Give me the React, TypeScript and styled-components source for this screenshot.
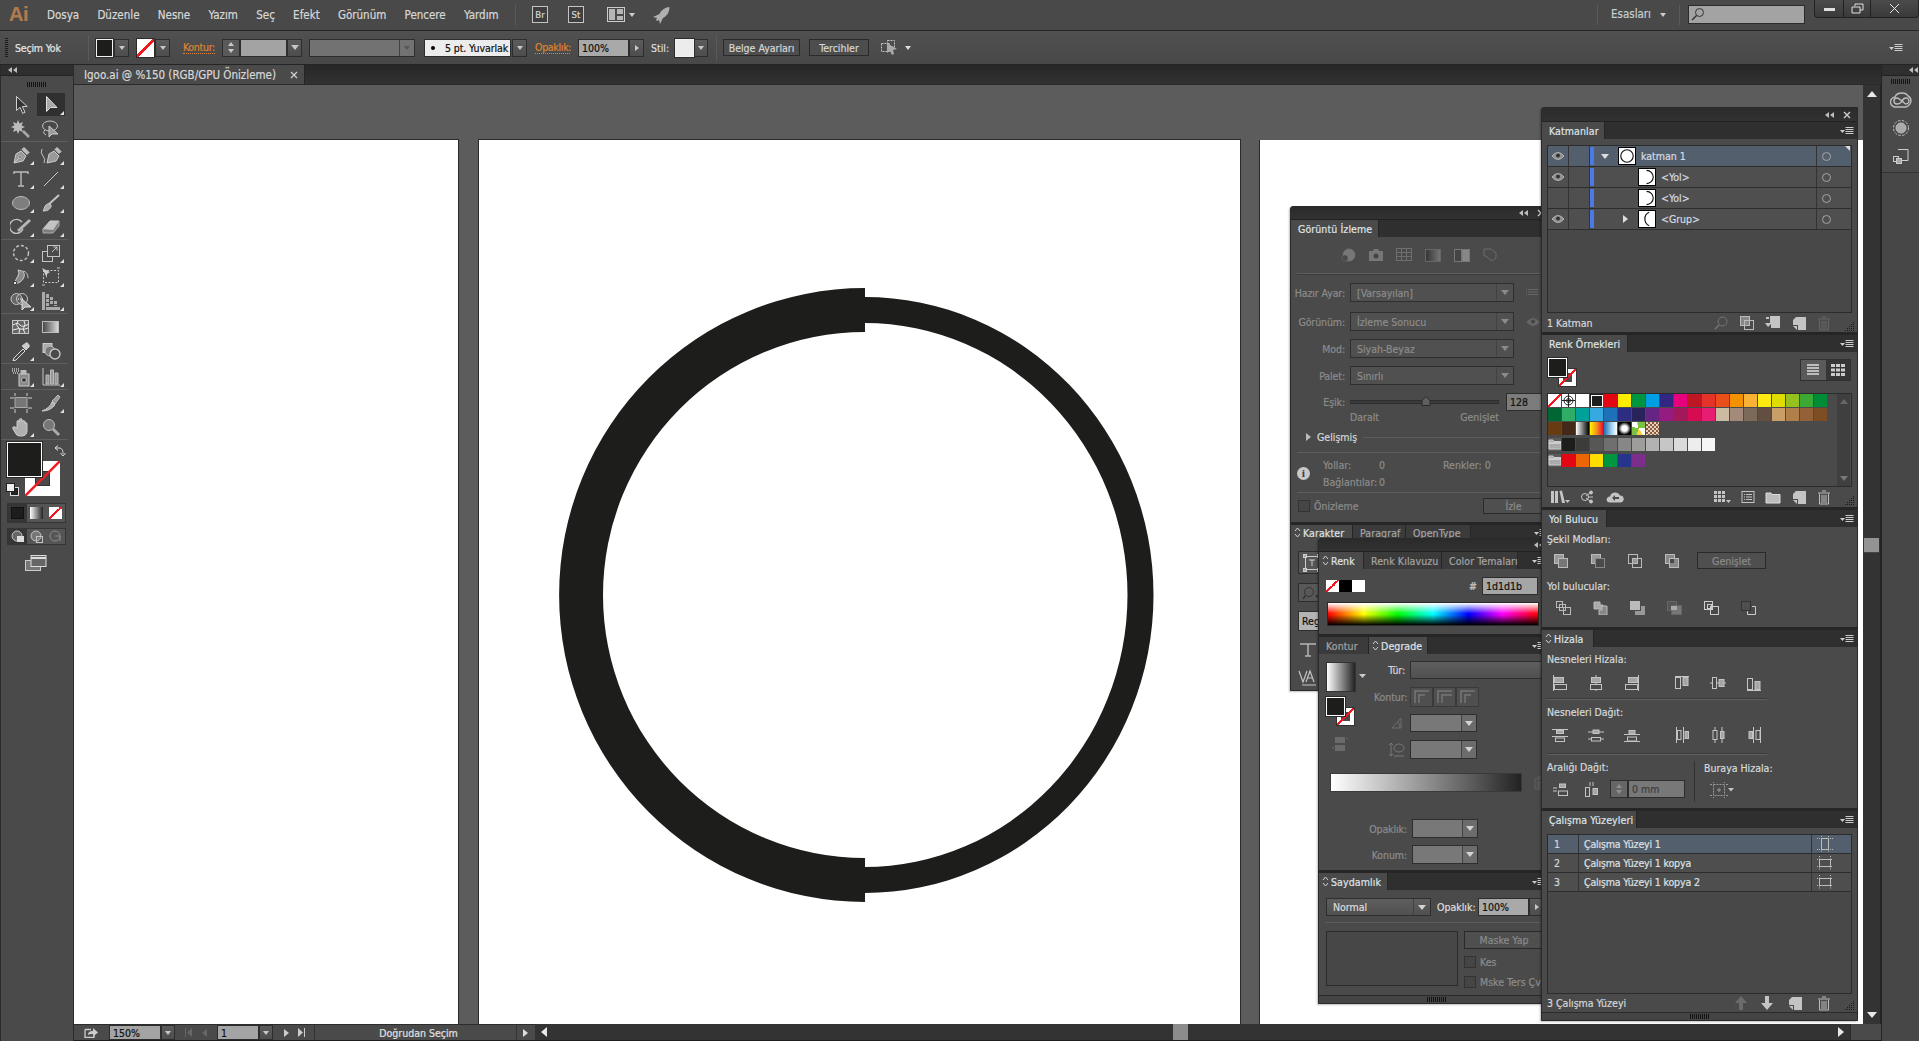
import React from 'react';
import styled, { createGlobalStyle } from 'styled-components';

const Global = createGlobalStyle`
  html, body { margin: 0; padding: 0; background: #2b2b2b; overflow: hidden; }
  * { box-sizing: border-box; }
`;

const UI = `"DejaVu Sans Condensed", "Liberation Sans", sans-serif`;

const Root = styled.div`
  width: 1919px; height: 1041px; display: flex; flex-direction: column; overflow: hidden;
  font-family: ${UI}; font-size: 10.5px; color: #d2d6da; background: #2b2b2b; position: relative;
  -webkit-text-stroke: 0.2px currentColor;
`;

const NONE_BG = 'linear-gradient(135deg,#fff 0 44%,#f01922 44% 56%,#fff 56%)';
const STROKE_BG = 'linear-gradient(135deg,transparent 45%,#f01922 45% 55%,transparent 55%), linear-gradient(#494949,#494949) center/9px 9px no-repeat, #fff';

/* ---------- primitives ---------- */
const Svg = styled.svg<{ $c?: string }>`
  display: block; flex: none; fill: none; stroke: ${p => p.$c || '#c4c4c4'}; stroke-width: 1;
`;
const Tri = styled.span<{ $dir?: 'up' | 'down' | 'left' | 'right'; $s?: number; $c?: string; $ml?: number }>`
  display: block; flex: none; width: 0; height: 0; margin-left: ${p => p.$ml || 0}px;
  ${p => {
    const s = p.$s || 4; const c = p.$c || '#c8c8c8';
    switch (p.$dir) {
      case 'up': return `border-left:${s}px solid transparent;border-right:${s}px solid transparent;border-bottom:${s + 1}px solid ${c};`;
      case 'left': return `border-top:${s}px solid transparent;border-bottom:${s}px solid transparent;border-right:${s + 1}px solid ${c};`;
      case 'right': return `border-top:${s}px solid transparent;border-bottom:${s}px solid transparent;border-left:${s + 1}px solid ${c};`;
      default: return `border-left:${s}px solid transparent;border-right:${s}px solid transparent;border-top:${s + 1}px solid ${c};`;
    }
  }}
`;
const CollapseMark = styled.span`
  display: flex; gap: 1px; align-items: center;
`;
const Collapse = ({ c = '#bdbdbd' }: { c?: string }) => (
  <CollapseMark><Tri $dir="left" $s={3} $c={c} /><Tri $dir="left" $s={3} $c={c} /></CollapseMark>
);
const GripBars = styled.div<{ $w?: number }>`
  width: ${p => p.$w || 20}px; height: 5px; flex: none;
  background: repeating-linear-gradient(to right, #141414 0 1px, transparent 1px 2px);
`;

/* ---------- menu bar ---------- */
const MenuBar = styled.header`
  height: 31px; flex: none; display: flex; align-items: flex-start; background: #494949;
  border-bottom: 1px solid #262626; position: relative;
`;
const AiLogo = styled.div`
  width: 47px; padding: 3px 0 0 9px; font: bold 20px/23px "Liberation Sans", sans-serif; color: #b17b50; flex: none; letter-spacing: -0.5px;
`;
const MenuList = styled.nav`
  display: flex; gap: 18.25px; height: 30px; align-items: center; flex: none; font-size: 11.5px; color: #d8d8d8; width: 468px;
`;
const BarSep = styled.div<{ $ml?: number; $h?: number }>`
  width: 1px; flex: none; height: ${p => p.$h || 20}px; background: #2e2e2e; margin-left: ${p => p.$ml || 0}px;
  border-right: 1px solid #5a5a5a; align-self: center;
`;
const AppBadge = styled.div<{ $ml: number }>`
  width: 16px; height: 17px; border: 1px solid #c4c4c4; margin: 6px 0 0 ${p => p.$ml}px; flex: none; font-size: 9.5px;
  line-height: 15px; text-align: center; color: #d8d8d8; background: #3f3f3f;
`;
const MenuIconSlot = styled.div<{ $ml: number; $mt?: number }>`
  margin: ${p => p.$mt ?? 7}px 0 0 ${p => p.$ml}px; flex: none; display: flex; align-items: center; gap: 4px;
`;
const WorkspaceName = styled.div`
  margin: 0 0 0 13px; width: 47px; height: 30px; line-height: 29px; font-size: 11.5px; color: #c5ced2; flex: none;
`;
const SearchBox = styled.div`
  width: 117px; height: 19px; margin: 5px 0 0 8px; background: #a3a3a3; border: 1px solid #2b2b2b; padding: 1px 0 0 2px; flex: none;
`;
const WindowButtons = styled.div`
  display: flex; height: 18px; margin-left: 9px; background: linear-gradient(#4b4b4b, #3a3a3a); border: 1px solid #222; border-top: 0; border-radius: 0 0 4px 4px; flex: none;
`;
const WinBtn = styled.div<{ $w: number }>`
  width: ${p => p.$w}px; display: flex; align-items: center; justify-content: center; border-right: 1px solid #222;
  &:last-child { border-right: 0; }
`;

/* ---------- control bar ---------- */
const ControlBar = styled.div`
  height: 34px; flex: none; display: flex; align-items: center; background: linear-gradient(#505050, #484848);
  border-bottom: 1px solid #242424; position: relative;
`;
const DotsGrip = styled.div`
  width: 3px; height: 20px; margin-left: 5px; flex: none;
  background: repeating-linear-gradient(to bottom, #1c1c1c 0 1px, transparent 1px 2px);
`;
const NoSel = styled.div`
  width: 60px; margin-left: 7px; flex: none; font-size: 10.5px; color: #e6e6e6; letter-spacing: -0.2px;
`;
const FillChip = styled.div<{ $ml: number; $bg?: string; $w?: number }>`
  width: ${p => p.$w || 17}px; height: 18px; margin-left: ${p => p.$ml}px; border: 1px solid #f2f2f2; background: ${p => p.$bg || '#1d1d1b'}; flex: none; outline: 1px solid #2c2c2c;
`;
const NoneChip = styled.div<{ $ml: number }>`
  width: 17px; height: 18px; margin-left: ${p => p.$ml}px; flex: none; outline: 1px solid #2c2c2c;
  background: ${NONE_BG};
`;
const Drop = styled.div<{ $w?: number; $h?: number; $ml?: number }>`
  width: ${p => p.$w || 15}px; height: ${p => p.$h || 18}px; margin-left: ${p => p.$ml ?? 1}px; flex: none;
  background: linear-gradient(#5c5c5c, #4d4d4d); border: 1px solid #2d2d2d; display: flex; align-items: center; justify-content: center;
`;
const OrangeLabel = styled.div<{ $ml: number; $w: number }>`
  margin-left: ${p => p.$ml}px; width: ${p => p.$w}px; flex: none; color: #dd8531; font-size: 10.5px; letter-spacing: -0.3px;
  border-bottom: 1px dotted #dd8531; line-height: 12px; white-space: nowrap;
`;
const Stepper = styled.div<{ $ml?: number; $w?: number; $h?: number; $bg?: string }>`
  width: ${p => p.$w || 18}px; height: ${p => p.$h || 18}px; margin-left: ${p => p.$ml || 0}px; flex: none; display: flex; flex-direction: column;
  background: ${p => p.$bg || '#5a5a5a'}; align-items: center; justify-content: space-evenly; border: 1px solid #2d2d2d;
`;
const Field = styled.div<{ $w: number; $h?: number; $ml?: number; $bg?: string; $c?: string }>`
  width: ${p => p.$w}px; height: ${p => p.$h || 18}px; margin-left: ${p => p.$ml || 0}px; flex: none; background: ${p => p.$bg || '#a6a6a6'};
  color: ${p => p.$c || '#111'}; border: 1px solid #2d2d2d; display: flex; align-items: center; padding-left: 3px; font-size: 10.5px; white-space: nowrap; overflow: hidden;
`;
const BrushBox = styled.div`
  width: 87px; height: 18px; margin-left: 9px; background: #ececec; flex: none; border: 1px solid #2d2d2d; color: #111; font-size: 10.5px;
  display: flex; align-items: center; padding-left: 6px; gap: 10px; white-space: nowrap; letter-spacing: -0.1px;
`;
const BrushDot = styled.span`width: 4px; height: 4px; border-radius: 50%; background: #000; flex: none;`;
const PlainLabel = styled.div<{ $ml?: number; $w?: number }>`
  margin-left: ${p => p.$ml || 0}px; width: ${p => (p.$w ? `${p.$w}px` : 'auto')}; flex: none; font-size: 10.5px; white-space: nowrap; color: #dedede;
`;
const Btn = styled.div<{ $w: number; $h?: number; $ml?: number; $dim?: boolean }>`
  width: ${p => p.$w}px; height: ${p => p.$h || 17}px; margin-left: ${p => p.$ml || 0}px; flex: none; display: flex; align-items: center; justify-content: center;
  background: ${p => (p.$dim ? '#4f4f4f' : '#4d4d4d')}; border: 1px solid #2a2a2a; color: ${p => (p.$dim ? '#8a8a8a' : '#d6d6d6')}; font-size: 10.5px; white-space: nowrap;
`;

/* ---------- workspace ---------- */
const Workspace = styled.div`display: flex; flex: 1; min-height: 0;`;
const ToolColumn = styled.aside`
  width: 74px; flex: none; display: flex; flex-direction: column; background: #4a4a4a; border-left: 1px solid #2b2b2b; border-right: 1px solid #2b2b2b;
`;
const DockHead = styled.div`
  height: 11px; background: #2f2f2f; flex: none; display: flex; align-items: center; padding: 0 7px; border-bottom: 1px solid #222;
`;
const ToolGrip = styled.div`
  height: 17px; display: flex; justify-content: center; align-items: center; flex: none;
`;
const ToolGroup = styled.div`
  padding: 0 0 0 5px; margin: 0 5px 1px 0; border-bottom: 1px solid #5f5f5f;
`;
const ToolRow = styled.div`display: grid; grid-template-columns: 30px 30px; height: 24px;`;
const Tool = styled.div<{ $active?: boolean; $corner?: boolean }>`
  display: flex; align-items: center; justify-content: center; position: relative; width: 28px; height: 23px; margin-left: 1px;
  background: ${p => (p.$active ? '#303030' : 'transparent')};
  ${p => p.$corner && `&::after { content:""; position:absolute; right:1px; bottom:1px; width:0; height:0; border-left:4px solid transparent; border-bottom:4px solid #e0e0e0; }`}
`;
const ColorWell = styled.div`
  position: relative; width: 60px; height: 55px; margin: 1px 0 0 6px; flex: none;
`;
const BigFill = styled.div`
  position: absolute; left: 0; top: 0; width: 35px; height: 35px; background: #1d1d1b; border: 1px solid #fff; outline: 1px solid #2a2a2a; z-index: 2;
`;
const BigStroke = styled.div`
  position: absolute; left: 18px; top: 19px; width: 35px; height: 35px; z-index: 1; background: #fff;
`;
const StrokeHole = styled.div`
  width: 15px; height: 15px; margin: 10px; background: #494949; border: 1px solid #333;
`;
const SlashSvg = styled.svg`position: absolute; left: 18px; top: 19px; z-index: 1;`;
const SwapSlot = styled.div`position: absolute; left: 47px; top: 2px; z-index: 3;`;
const DefaultSlot = styled.div`position: absolute; left: -1px; top: 41px; z-index: 3;`;
const ToolSegments = styled.div<{ $mt: number; $h: number }>`
  display: flex; width: 59px; height: ${p => p.$h}px; margin: ${p => p.$mt}px 0 0 6px; border: 1px solid #353535; flex: none; background: #3d3d3d;
`;
const ToolSeg = styled.div<{ $on?: boolean }>`
  flex: 1; display: flex; align-items: center; justify-content: center; background: ${p => (p.$on ? '#363636' : '#555')};
`;
const ScreenSlot = styled.div`margin: 10px 0 0 24px; flex: none;`;

const DocArea = styled.main`flex: 1; min-width: 0; display: flex; flex-direction: column;`;
const DocTabs = styled.div`height: 20px; flex: none; background: linear-gradient(#272727, #313131); display: flex; border-bottom: 1px solid #2a2a2a;`;
const DocTab = styled.div`
  width: 231px; background: #4a4a4a; display: flex; align-items: center; padding-left: 10px; font-size: 11.5px; color: #d8d8d8; white-space: nowrap;
  border-right: 1px solid #242424;
`;
const DocClose = styled.span`margin-left: auto; margin-right: 6px; display: block;`;
const CanvasRow = styled.div`flex: 1; min-height: 0; display: flex;`;
const Canvas = styled.div`
  flex: 1; min-width: 0; position: relative; background: #5c5c5c; overflow: hidden; display: flex; gap: 20px; padding: 55px 0 0 0;
`;
const Artboard = styled.div<{ $w: number; $mr?: number }>`
  width: ${p => p.$w}px; margin-right: ${p => p.$mr || 0}px; background: #fff; flex: none; align-self: stretch; box-shadow: 0 0 0 1px #2a2a2a; position: relative;
`;
const WideArtboard = styled(Artboard)`flex: 1; box-shadow: none; border-left: 1px solid #2a2a2a;`;
const ArtSvg = styled.svg`display: block;`;
const VScroll = styled.div`
  width: 18px; flex: none; background: #333; border-right: 1px solid #242424; display: flex; flex-direction: column; align-items: center; padding: 6px 0; position: relative;
`;
const VTrack = styled.div`flex: 1;`;
const VThumb = styled.div`position: absolute; left: 1px; top: 453px; width: 15px; height: 15px; background: #939393; border-bottom: 1px solid #444;`;
const StatusRow = styled.footer`
  height: 17px; flex: none; display: flex; background: #333; border-bottom: 1px solid #1e1e1e;
`;
const StatusInfo = styled.div`
  width: 461px; flex: none; display: flex; align-items: center; background: #4a4a4a; border-top: 1px solid #2d2d2d;
`;
const StatusText = styled.div`width: 201px; text-align: center; padding-left: 6px; flex: none; font-size: 10.5px; color: #e0e0e0; white-space: nowrap;`;
const StatusSep = styled.div`width: 1px; height: 15px; background: #333; flex: none;`;
const HScroll = styled.div`flex: 1; display: flex; align-items: center; position: relative; padding: 0 6px; justify-content: space-between; background: #333;`;
const HThumb = styled.div`position: absolute; left: 638px; top: 0; width: 15px; height: 16px; background: #8c8c8c;`;
const Corner = styled.div`width: 31px; flex: none; background: #4a4a4a; border-left: 1px solid #292929;`;

const RightDock = styled.aside`
  width: 38px; flex: none; display: flex; flex-direction: column; background: #474747; border-left: 1px solid #242424;
`;
const RightHead = styled(DockHead)`justify-content: flex-end; padding: 0 1px;`;
const RightTools = styled.div`
  height: 97px; flex: none; border-bottom: 1px solid #333; background: #4a4a4a; display: flex; flex-direction: column; align-items: center; padding-top: 3px; gap: 12px;
`;
const RightGrip = styled(GripBars)`margin-bottom: -4px;`;

/* ---------- floating panels ---------- */
const PanelStack = styled.div<{ $x: number; $y: number; $w: number; $z?: number }>`
  position: absolute; left: ${p => p.$x}px; top: ${p => p.$y}px; width: ${p => p.$w}px; display: flex; flex-direction: column; z-index: ${p => p.$z || 1};
  background: #262626; gap: 3px; box-shadow: -1px 1px 2px rgba(0,0,0,.25); border: 1px solid #2a2a2a; border-top-left-radius: 3px;
`;
const Panel = styled.section<{ $h: number }>`
  height: ${p => p.$h}px; flex: none; background: #4a4a4a; display: flex; flex-direction: column; position: relative; overflow: hidden;
`;
const TitleStrip = styled.div<{ $h?: number }>`
  height: ${p => p.$h || 14}px; flex: none; background: linear-gradient(#2b2b2b, #323232); display: flex; align-items: center; justify-content: flex-end; gap: 9px; padding-right: 6px; border-bottom: 1px solid #222;
`;
const TabStrip = styled.div<{ $h?: number }>`
  height: ${p => p.$h || 17}px; flex: none; background: #2f2f2f; display: flex; align-items: stretch; position: relative; font-size: 10.5px; white-space: nowrap;
`;
const PTab = styled.div<{ $active?: boolean; $w: number }>`
  width: ${p => p.$w}px; flex: none; display: flex; align-items: center; gap: 2px; padding-left: ${p => (p.$active ? 3 : 7)}px; white-space: nowrap;
  background: ${p => (p.$active ? '#4a4a4a' : '#3b3b3b')}; color: ${p => (p.$active ? '#dfe3e6' : '#a4a4a4')}; border-right: 1px solid #262626;
  letter-spacing: 0.1px;
`;
const PTabPlain = styled(PTab)`padding-left: 7px;`;
const TabMenu = styled.div`margin-left: auto; align-self: center; margin-right: 3px;`;
const Body = styled.div`
  flex: 1; min-height: 0; display: flex; flex-direction: column; color: #d2d6da;
`;
const ListBox = styled.div<{ $h: number; $mt?: number }>`
  margin: ${p => p.$mt ?? 6}px 0 0 5px; width: 305px; height: ${p => p.$h}px; flex: none; border: 1px solid #2b2b2b; background: #484848; position: relative;
`;
const LayerRow = styled.div<{ $sel?: boolean }>`
  height: 21px; display: flex; align-items: stretch; background: ${p => (p.$sel ? '#545f6e' : '#4f4f4f')}; border-bottom: 1px solid #2d2d2d; position: relative; font-size: 10.5px;
`;
const EyeCell = styled.div`width: 21px; flex: none; border-right: 1px solid #333; display: flex; align-items: center; justify-content: center;`;
const LockCell = styled.div`width: 21px; flex: none; border-right: 1px solid #333;`;
const ColorBar = styled.div`width: 4px; margin: 1px 3px 1px 0; flex: none; background: #4a79e8;`;
const TreeCell = styled.div<{ $w: number; $pr?: number }>`width: ${p => p.$w}px; flex: none; display: flex; align-items: center; padding-right: ${p => p.$pr || 0}px; justify-content: center;`;
const Thumb = styled.div`width: 18px; height: 18px; margin-top: 1px; flex: none; background: #fff; border: 1px solid #000;`;
const LayerName = styled.div<{ $ml: number }>`margin-left: ${p => p.$ml}px; align-self: center; flex: 1; color: #d6dbe0;`;
const TargetCell = styled.div`width: 35px; flex: none; border-left: 1px solid #333; display: flex; align-items: center; padding-left: 5px;`;
const Target = styled.span`width: 9px; height: 9px; border-radius: 50%; border: 1px solid #a5a5a5; display: block;`;
const CornerMark = styled.span`position: absolute; right: 1px; top: 0; width: 0; height: 0; border-top: 5px solid #ddd; border-left: 5px solid transparent;`;
const PanelFooter = styled.div<{ $h?: number }>`
  height: ${p => p.$h || 20}px; flex: none; display: flex; align-items: center; padding: 0 26px 0 5px; position: relative; font-size: 10.5px;
`;
const FooterIcons = styled.div<{ $gap?: number }>`margin-left: auto; display: flex; gap: ${p => p.$gap ?? 10}px; align-items: center;`;
const FooterLeft = styled.div`display: flex; gap: 11px; align-items: center; margin-left: 3px;`;
const Resize = styled.div`position: absolute; right: 2px; bottom: 1px;`;

const SwatchHead = styled.div`height: 41px; flex: none; position: relative;`;
const MiniFill = styled.div`position: absolute; left: 6px; top: 6px; width: 19px; height: 19px; background: #1d1d1b; border: 1px solid #fff; z-index: 2; outline: 1px solid #2a2a2a;`;
const MiniStroke = styled.div`position: absolute; left: 16px; top: 16px; width: 19px; height: 19px; z-index: 1; background: ${STROKE_BG}; border: 1px solid #333;`;
const ViewToggle = styled.div`position: absolute; left: 258px; top: 7px; width: 51px; height: 22px; display: flex; border: 1px solid #303030;`;
const ViewBtn = styled.div<{ $on?: boolean }>`flex: 1; display: flex; align-items: center; justify-content: center; background: ${p => (p.$on ? '#5a5a5a' : '#363636')};`;
const SwatchList = styled.div`
  margin-left: 5px; width: 305px; height: 94px; flex: none; border: 1px solid #2b2b2b; background: #4a4a4a; display: flex;
`;
const SwatchRows = styled.div`flex: 1;`;
const SwatchLine = styled.div<{ $mb?: number }>`display: flex; margin-bottom: ${p => p.$mb || 0}px; height: 14px;`;
const Swatch = styled.div<{ $bg: string }>`
  width: 14px; height: 14px; flex: none; border-right: 1px solid #4a4a4a; border-bottom: 1px solid #4a4a4a; position: relative; overflow: hidden; background: ${p => p.$bg};
`;
const FramedSwatch = styled(Swatch)`outline: 1px solid #fff; outline-offset: -2px;`;
const ListScroll = styled.div`width: 13px; flex: none; background: #3f3f3f; display: flex; flex-direction: column; align-items: center; justify-content: space-between; padding: 5px 0; margin-right: 1px;`;

const SectionLabel = styled.div<{ $mt: number; $ml?: number }>`margin: ${p => p.$mt}px 0 0 ${p => p.$ml ?? 5}px; font-size: 10.5px; line-height: 13px; color: #d4dade; white-space: nowrap; flex: none;`;
const IconLine = styled.div<{ $mt: number; $pl?: number }>`display: flex; margin-top: ${p => p.$mt}px; padding-left: ${p => p.$pl || 0}px; align-items: center; flex: none;`;
const IconCell = styled.div<{ $w?: number; $mr?: number }>`width: ${p => p.$w || 36}px; margin-right: ${p => p.$mr || 0}px; display: flex; justify-content: center; flex: none;`;
const HRule = styled.div<{ $mt: number; $w?: number; $ml?: number }>`height: 1px; background: #5f5f5f; box-shadow: 0 -1px 0 #3a3a3a; margin: ${p => p.$mt}px 0 0 ${p => p.$ml ?? 5}px; width: ${p => (p.$w ? `${p.$w}px` : 'auto')}; flex: none;`;
const SplitRow = styled.div`display: flex; flex: none;`;
const SplitCol = styled.div<{ $w?: number }>`width: ${p => (p.$w ? `${p.$w}px` : 'auto')}; flex: none; display: flex; flex-direction: column;`;
const VRule = styled.div`width: 1px; height: 41px; background: #333; margin: 6px 9px 0 0; flex: none;`;

const ArtRow = styled.div<{ $sel?: boolean }>`height: 19px; display: flex; align-items: stretch; background: ${p => (p.$sel ? '#545f6e' : '#4e4e4e')}; border-bottom: 1px solid #2d2d2d; font-size: 10.5px;`;
const ArtNum = styled.div`width: 31px; flex: none; border-right: 1px solid #333; display: flex; align-items: center; padding-left: 6px;`;
const ArtName = styled.div`flex: 1; display: flex; align-items: center; padding-left: 5px; color: #dde0e3; letter-spacing: -0.15px;`;
const ArtIcon = styled.div`width: 40px; flex: none; border-left: 1px solid #333; display: flex; align-items: center; padding-left: 5px;`;
const BottomGrip = styled.div<{ $left?: number }>`
  height: 8px; flex: none; display: flex; align-items: center; justify-content: ${p => (p.$left ? 'flex-start' : 'center')}; padding-left: ${p => p.$left || 0}px;
  border-top: 1px solid #2a2a2a; background: #444; margin-top: auto;
`;

/* trace panel */
const TraceIcons = styled.div`height: 37px; flex: none; display: flex; align-items: center; gap: 13px; padding: 0 0 0 43px; border-bottom: 1px solid #5d5d5d; margin: 0 0 0 6px; box-shadow: 0 1px 0 #3c3c3c;`;
const FormRow = styled.div<{ $mt: number }>`display: flex; align-items: center; margin-top: ${p => p.$mt}px; flex: none;`;
const FormLabel = styled.div<{ $w: number; $c?: string }>`width: ${p => p.$w}px; text-align: right; flex: none; color: ${p => p.$c || '#8c8c8c'}; font-size: 10.5px; white-space: nowrap; letter-spacing: -0.1px;`;
const Select = styled.div<{ $w: number; $h?: number; $ml?: number; $bg?: string; $c?: string }>`
  width: ${p => p.$w}px; height: ${p => p.$h || 19}px; margin-left: ${p => p.$ml ?? 5}px; flex: none; display: flex; align-items: center; border: 1px solid #2e2e2e; background: ${p => p.$bg || '#505050'};
  color: ${p => p.$c || '#8c8c8c'}; padding-left: 6px; font-size: 10.5px; white-space: nowrap;
`;
const SelectArrow = styled.div<{ $bg?: string; $w?: number }>`margin-left: auto; width: ${p => p.$w || 17}px; height: 100%; display: flex; align-items: center; justify-content: center; border-left: 1px solid #424242; background: ${p => p.$bg || 'transparent'};`;
const SliderTrack = styled.div`width: 149px; height: 4px; margin-left: 5px; background: #3c3c3c; border: 1px solid #2d2d2d; position: relative; flex: none;`;
const SliderKnob = styled.div`position: absolute; left: 70px; top: -5px;`;
const MiniLabels = styled.div`display: flex; justify-content: space-between; width: 149px; margin: 0 0 0 59px; color: #8c8c8c; flex: none; font-size: 10.5px;`;
const AdvancedRow = styled.div`height: 16px; margin-top: 6px; display: flex; align-items: center; padding-left: 15px; gap: 6px; flex: none; color: #d5d5d5; font-size: 10.5px;`;
const AdvLine = styled.div`flex: 1; height: 1px; background: #5d5d5d;`;
const InfoArea = styled.div`display: flex; height: 41px; margin-left: 6px; flex: none; border-top: 1px solid #5d5d5d; margin-top: 7px; border-bottom: 1px solid #5d5d5d;`;
const InfoDot = styled.div`width: 13px; height: 13px; border-radius: 50%; background: #c9c9c9; color: #3a3a3a; font: bold 10px/13px "Liberation Serif", serif; text-align: center; margin: 14px 13px 0 0; flex: none;`;
const InfoGrid = styled.div`display: grid; grid-template-columns: 56px 64px 60px; grid-auto-rows: 17px; padding-top: 6px; color: #8c8c8c; font-size: 10.5px; white-space: nowrap;`;
const Check = styled.div<{ $ml?: number }>`width: 12px; height: 12px; border: 1px solid #333; background: #454545; margin-left: ${p => p.$ml ?? 0}px; flex: none;`;
const DimText = styled.div<{ $ml?: number }>`margin-left: ${p => p.$ml ?? 4}px; color: #8c8c8c; font-size: 10.5px; white-space: nowrap;`;
const Spacer12 = styled.div`margin-left: 12px; flex: none;`;
const AngleWrap = styled.div`display: flex; justify-content: flex-end;`;

/* character panel slivers */
const CharBody = styled.div`flex: 1; padding: 11px 0 0 7px; display: flex; flex-direction: column; gap: 9px;`;
const CharBox = styled.div<{ $h: number; $bg?: string }>`width: 40px; height: ${p => p.$h}px; background: ${p => p.$bg || '#555'}; border: 1px solid #2d2d2d; display: flex; align-items: center; color: #111; padding-left: 3px; flex: none; font-size: 10.5px;`;

/* color panel */
const ColorTop = styled.div`display: flex; height: 25px; align-items: center; padding: 8px 0 0 7px; flex: none;`;
const MiniSw = styled.div<{ $bg: string; $dark?: boolean }>`width: 13px; height: 12px; flex: none; background: ${p => p.$bg}; ${p => p.$dark && 'border: 1px solid #111;'}`;
const HashLabel = styled.div`margin-left: 104px; width: 13px; color: #bbb; font-weight: bold; font-size: 10.5px;`;
const Spectrum = styled.div`
  margin: 8px 0 0 8px; width: 212px; height: 24px; border: 1px solid #2a2a2a; flex: none;
  background: linear-gradient(to bottom, #fff 0%, rgba(255,255,255,0) 48%, rgba(0,0,0,0) 52%, #000 100%),
    linear-gradient(to right, #f00, #ff0 17%, #0f0 33%, #0ff 50%, #00f 67%, #f0f 83%, #f00);
`;
const GradTop = styled.div`display: flex; padding-top: 7px; flex: none;`;
const GradLeft = styled.div`width: 48px; margin-left: 7px; flex: none; position: relative; height: 98px;`;
const GradPreview = styled.div`width: 30px; height: 30px; background: linear-gradient(to right, #fff, #222); border: 1px solid #333; margin-top: 1px;`;
const GradArrow = styled.div`position: absolute; left: 33px; top: 13px;`;
const GradFill = styled.div`position: absolute; left: 0; top: 36px; width: 19px; height: 19px; background: #1d1d1b; border: 1px solid #fff; outline: 1px solid #2a2a2a; z-index: 2;`;
const GradStroke = styled.div`position: absolute; left: 10px; top: 46px; width: 19px; height: 19px; background: ${STROKE_BG}; z-index: 1; border: 1px solid #333;`;
const GradSmall = styled.div`position: absolute; left: 6px; top: 76px;`;
const GradRight = styled.div`flex: 1; display: flex; flex-direction: column;`;
const CapBtn = styled.div`width: 23px; height: 20px; background: #4f4f4f; border: 1px solid #3a3a3a; display: flex; align-items: center; justify-content: center; flex: none;`;
const CapGroup = styled.div`display: flex; margin-left: 5px;`;
const GradBarRow = styled.div`display: flex; align-items: center; margin: 14px 0 0 11px; flex: none; gap: 11px;`;
const GradBar = styled.div`width: 192px; height: 19px; background: linear-gradient(to right, #fff, #222); border: 1px solid #3a3a3a; flex: none;`;
const TransRow = styled.div`display: flex; align-items: center; padding: 8px 0 0 7px; flex: none;`;
const TransRule = styled.div`height: 1px; margin: 6px 0 0 6px; background: #5d5d5d; flex: none;`;
const TransLower = styled.div`display: flex; padding: 8px 0 0 7px; flex: none;`;
const MaskBox = styled.div`width: 132px; height: 55px; background: #474747; border: 1px solid #2b2b2b; flex: none;`;
const MaskSide = styled.div`margin-left: 6px; display: flex; flex-direction: column; flex: none;`;
const CheckLine = styled.div<{ $mt: number }>`display: flex; align-items: center; margin-top: ${p => p.$mt}px; flex: none;`;

/* ---------- icon data ---------- */
type IP = { s?: number; c?: string };
const mk = (w: number, h: number, kids: React.ReactNode) => ({ s, c }: IP) => (
  <Svg width={s ? (s * w) / h : w} height={s || h} viewBox={`0 0 ${w} ${h}`} $c={c}>{kids}</Svg>
);

const Ics = {
  select: mk(20, 20, <path d="M5.5 1.5v14l3.6-3.2 2.6 6 2.3-1-2.6-5.8h4.8z" fill="#333" stroke="#d0d0d0" />),
  direct: mk(20, 20, <path d="M5.5 1.5v15l4-4h6.5z" fill="#a8a8a8" stroke="#dcdcdc" />),
  wand: mk(20, 20, <g><path d="M12 12l6 6" strokeWidth="2.5" stroke="#aaa" /><path d="M7 1l1.5 3.4L12 3l-1.4 3.5L14 8l-3.4 1.5L12 13 8.5 11.5 7 15l-1.4-3.5L2 13l1.4-3.5L0 8l3.4-1.5L2 3l3.6 1.4z" fill="#bcbcbc" stroke="none" /></g>),
  lasso: mk(20, 20, <g><ellipse cx="9" cy="7" rx="7.5" ry="5" /><path d="M4 11q-3 3 1 5" /><path d="M8 7v11l3-3h6z" fill="#999" stroke="#ccc" /></g>),
  pen: mk(20, 20, <g><path d="M3 18l2-9 5-3 5 5-3 5z" fill="#999" stroke="#ccc" /><path d="M3 18l5.5-5.5" /><circle cx="9" cy="12" r="1.3" fill="#333" /><path d="M11 4.5l2-2 5 5-2 2z" fill="#bbb" stroke="#ccc" /></g>),
  curve: mk(22, 20, <g><path d="M7 18l2-9 5-3 5 5-3 5z" fill="#999" stroke="#ccc" /><path d="M15 4.5l2-2 4 4-2 2z" fill="#bbb" stroke="#ccc" /><path d="M2 4q-2 4 1 7t1 7" /></g>),
  type: mk(20, 20, <g stroke="#bcbcbc" strokeWidth="1.4"><path d="M3 5V3h14v2M10 3v14M7 17h6" /></g>),
  line: mk(20, 20, <path d="M3 17L17 3" />),
  ellipse: mk(20, 20, <ellipse cx="10" cy="10" rx="8.5" ry="6.5" fill="#7e7e7e" stroke="#bbb" />),
  brush: mk(20, 20, <g><path d="M7 12L18 2" strokeWidth="2" /><path d="M2 18c1-1 1-4 3-6s4-1 5 0-1 4-3 5-3 1-5 1z" fill="#aaa" stroke="#ccc" /></g>),
  blob: mk(22, 20, <g strokeWidth="1.4"><path d="M12 5a7 7 0 1 0 1 7" /><path d="M8 14L20 3" strokeWidth="3" stroke="#b5b5b5" /></g>),
  eraser: mk(20, 20, <g><path d="M2 12L9 4h9l-6 9H2z" fill="#c4c4c4" stroke="#ccc" /><path d="M2 12v4h10l6-7V4l-6 9" fill="#7e7e7e" stroke="#aaa" /></g>),
  rotate: mk(20, 20, <circle cx="10" cy="10" r="7.5" strokeDasharray="3 2" strokeWidth="1.4" />),
  scale: mk(20, 20, <g><rect x="1.5" y="8.5" width="10" height="10" /><rect x="6.5" y="2.5" width="12" height="11" fill="#4a4a4a" /><path d="M11 9l5-5M12.5 4H16v3.5" /></g>),
  warp: mk(20, 20, <g><path d="M3 17q8-1 10-7t-6-7q2 3 0 6t-4 8z" fill="#888" stroke="#ccc" /><circle cx="4" cy="16" r="1.6" fill="#fff" stroke="#333" /><path d="M12 4q5 1 5 7" /></g>),
  freeT: mk(20, 20, <g><rect x="2.5" y="3.5" width="15" height="12" strokeDasharray="2 1.5" /><path d="M1 1l8 4-3 2 0 4z" fill="#ccc" stroke="none" /><path d="M1 18h3M16 1h3" /></g>),
  shape: mk(22, 20, <g><circle cx="6.5" cy="8" r="5.5" fill="#666" /><circle cx="12" cy="8" r="5.5" /><path d="M8 8h5" strokeDasharray="1 1" stroke="#fff" /><path d="M12 8v11l3-3h6z" fill="#aaa" stroke="#ddd" /></g>),
  persp: mk(20, 20, <g fill="#aaa" stroke="none"><path d="M1 1h3v18H1zM5 3h3v4H5zM9 6h3v3H9zM5 8h3v3H5zM9 10h3v3H9zM13 10h3v3h-3zM5 12h3v3H5zM5 16h14v3H5zM13 14h3v1h-3z" /></g>),
  mesh: mk(22, 20, <g><rect x="2.5" y="3.5" width="16" height="13" fill="#666" /><path d="M3 8q5-3 7 0t9-1M3 13q5-2 8-1t7-1M8 4q-3 4 0 6t1 6M14 4q2 4 0 6t1 6" stroke="#eee" /></g>),
  grad: mk(22, 20, <g><defs><linearGradient id="tg" x1="0" x2="1"><stop offset="0" stopColor="#444" /><stop offset="1" stopColor="#ddd" /></linearGradient></defs><rect x="2.5" y="4.5" width="16" height="11" fill="url(#tg)" stroke="#bbb" /></g>),
  dropper: mk(20, 20, <g><path d="M3 17l9-9 2 2-9 9-3 1z" fill="#444" stroke="#ddd" /><path d="M11 5l4 4 3-3c1-1-1-5-3-4z" fill="#ccc" stroke="#ccc" /></g>),
  blend: mk(22, 20, <g><rect x="3" y="2.5" width="9" height="9" fill="#aaa" stroke="#ccc" /><circle cx="10" cy="10" r="5" fill="#777" /><circle cx="15" cy="13" r="5" fill="#4a4a4a" strokeWidth="1.4" /></g>),
  spray: mk(20, 20, <g><rect x="8" y="7" width="10" height="12" fill="#888" stroke="#ccc" /><circle cx="13" cy="13" r="2.4" fill="#333" /><rect x="10" y="3.5" width="5" height="3" fill="#bbb" stroke="#bbb" /><path d="M1 2h7M1 4h7M2 6h5" strokeDasharray="1 1" strokeWidth="1.4" /></g>),
  chart: mk(20, 20, <g><path d="M2 1v17h17" /><path d="M5 8h3v9H5zM9.5 3h3v14h-3zM14 6h3v11h-3z" fill="#999" stroke="#bbb" /></g>),
  artb: mk(22, 20, <g><rect x="5" y="4.5" width="12" height="10" fill="#777" stroke="#aaa" /><path d="M0 5h4M18 5h4M0 15h4M18 15h4M5 0v3M17 0v3M5 16v4M17 16v4" stroke="#ccc" /></g>),
  knife: mk(20, 20, <g><path d="M1 18q8-3 10-9l3 3q-5 6-13 6z" fill="#aaa" stroke="#ccc" /><path d="M11 8l6-6 2 2-5 7z" fill="#999" stroke="#bbb" /></g>),
  hand: mk(20, 20, <path d="M4 10c-1-1-3 0-2 2l3 5c1 2 3 2 6 2s5-2 5-5V7c0-2-2-2-2 0V5c0-2-3-2-3 0V3c0-2-2-2-3 0v2C8 3 6 3 6 5v6z" fill="#b0b0b0" stroke="#ccc" />),
  zoom: mk(20, 20, <g><circle cx="8" cy="8" r="5.5" fill="#777" stroke="#bbb" /><path d="M12 12l6 6" strokeWidth="3" stroke="#aaa" /></g>),
  swap: mk(12, 14, <g stroke="#ddd"><path d="M1 4h4c3 0 4 2 4 6" /><path d="M4 1.5L1 4l3 2.5" /><path d="M6.5 9l2.5 3 2.5-3" /></g>),
  defaults: mk(13, 13, <g><rect x="4.5" y="4.5" width="8" height="8" fill="#222" stroke="#ddd" /><rect x="0.5" y="0.5" width="8" height="8" fill="#eee" stroke="#222" /></g>),
  colorMode: mk(14, 13, <g><circle cx="6" cy="6" r="5" fill="#666" /><rect x="6" y="6" width="7" height="6" fill="#ddd" stroke="none" /></g>),
  drawBehind: mk(14, 13, <g><circle cx="6" cy="6" r="5" fill="#777" /><rect x="6.5" y="6.5" width="6" height="6" /></g>),
  drawInside: mk(14, 13, <g stroke="#8a8a8a"><circle cx="6" cy="6" r="5" /><path d="M6 6h5v5" /></g>),
  screen: mk(22, 16, <g><rect x="0.5" y="5.5" width="15" height="10" fill="#777" stroke="#ccc" /><rect x="6" y="0.5" width="15" height="11" fill="#666" stroke="#ddd" /><path d="M6 3h15" stroke="#ddd" strokeWidth="2" /></g>),
  eye: mk(14, 10, <g><path d="M1 5q6-7 12 0-6 7-12 0z" fill="#8f8f8f" stroke="#b5b5b5" /><circle cx="7" cy="4.5" r="2" fill="#333" stroke="none" /></g>),
  menu: mk(14, 8, <g><path d="M0 3h5L2.5 6z" fill="#ccc" stroke="none" /><path d="M5.5 0.5h8M5.5 2.5h8M5.5 4.5h8M5.5 6.5h8" stroke="#ccc" /></g>),
  search: mk(14, 14, <g stroke="#333"><circle cx="8.5" cy="5.5" r="4" /><path d="M5.5 8.5L1 13" strokeWidth="1.5" /></g>),
  close: mk(8, 8, <path d="M1 1l6 6M7 1L1 7" stroke="#ccc" strokeWidth="1.4" />),
  arrange: mk(18, 15, <g fill="#b5b5b5" stroke="#ccc"><rect x="0.5" y="0.5" width="17" height="14" fill="none" /><rect x="2" y="2" width="6" height="11" stroke="none" /><rect x="10" y="2" width="6" height="5" stroke="none" /><rect x="10" y="9" width="6" height="4" stroke="none" /></g>),
  rocket: mk(18, 18, <path d="M17.5 0c-5 .5-8 3-10 7L1 10l4 1-1 2 1 1 2-1 1 4 3-6c4-2 6.5-6 6.5-11z" fill="#b0b0b0" stroke="none" />),
  ctlIcon: mk(17, 15, <g><rect x="0.5" y="3.5" width="8" height="8" strokeDasharray="2 1" /><rect x="6.5" y="0.5" width="7" height="7" strokeDasharray="2 1" /><path d="M6 3l10 6-4 1 1 4-2 1-2-4-3 2z" fill="#aaa" stroke="none" /></g>),
  cc: mk(22, 16, <g stroke="#bdbdbd" strokeWidth="1.4"><path d="M6 15a5 5 0 0 1-1-10c1-3 4-4 7-4 3 0 5 1 6 3 2 1 3 3 3 5s-2 5-5 6z" /><path d="M7 12a3 3 0 0 1 0-6c2 0 3 2 5 3s2 3 4 3 3-2 3-3-1-3-3-3-3 1-4 3-2 3-5 3z" /></g>),
  libs: mk(18, 16, <g><circle cx="9" cy="8" r="5" fill="#aaa" stroke="#bbb" /><circle cx="9" cy="8" r="7.5" strokeDasharray="2.5 1.5" /></g>),
  assets: mk(18, 16, <g stroke="#ccc"><path d="M6 1.5h10v11H10" /><rect x="1.5" y="8.5" width="5" height="5" /><rect x="4.5" y="10.5" width="5" height="5" fill="#aaa" /></g>),
  thL: mk(18, 18, <path d="M8.5 1.5a7.5 7.5 0 0 1 0 15" stroke="#111" strokeWidth="1.3" />),
  thR: mk(18, 18, <path d="M11.5 1.5a7.5 8 0 0 0 0 15" stroke="#111" strokeWidth="1.3" />),
  thC: mk(18, 18, <circle cx="9" cy="9" r="7" stroke="#111" strokeWidth="1.3" />),
  reg: mk(13, 13, <g stroke="#222"><circle cx="6.5" cy="6.5" r="4.5" /><circle cx="6.5" cy="6.5" r="2" /><path d="M6.5 0v13M0 6.5h13" /></g>),
  magnify: mk(16, 16, <g stroke="#777"><circle cx="9.5" cy="6.5" r="4.5" /><path d="M6 10l-4 4" strokeWidth="1.5" /></g>),
  subLayer: mk(16, 16, <g stroke="#bbb"><rect x="1.5" y="1.5" width="9" height="9" fill="#888" /><rect x="5.5" y="5.5" width="9" height="9" fill="none" /></g>),
  makeClip: mk(16, 16, <g fill="#c4c4c4" stroke="none"><path d="M1 2h3v2H1zM5 1h10v12H6V9L3 12 0 8h5z" /></g>),
  newItem: mk(16, 16, <g fill="#c4c4c4" stroke="none"><path d="M5 2h10v13H7v-5H2V5z" /><path d="M2 11h4v4z" /></g>),
  trash: mk(14, 16, <g stroke="#bcbcbc"><path d="M1 4h12M5 2h4M2.5 5v10h9V5M5 6v8M7 6v8M9 6v8" /></g>),
  trashDim: mk(14, 16, <g stroke="#666"><path d="M1 4h12M5 2h4M2.5 5v10h9V5M5 6v8M7 6v8M9 6v8" /></g>),
  libsMenu: mk(20, 14, <g fill="#c4c4c4" stroke="none"><path d="M1 1h3v12H1zM5 1h3v12H5zM9.5 1l2.5-.5L15 13h-3z" /><path d="M15 10h5l-2.5 3z" /></g>),
  share: mk(14, 14, <g><circle cx="4" cy="7" r="3.5" /><circle cx="10" cy="2.5" r="1.5" fill="#ccc" /><circle cx="10" cy="11.5" r="1.5" fill="#ccc" /><path d="M5 6l4-3M5 8l4 3M7 7h5" /></g>),
  cloud: mk(18, 12, <path d="M4 11.5c-5 0-4-6 0-6 1-4 7-6 10-1 5 0 5 7 0 7zM6 7l3-3v2h4v2H9v2z" fill="#c4c4c4" stroke="none" fillRule="evenodd" />),
  gridNew: mk(18, 14, <g fill="#c4c4c4" stroke="none"><path d="M1 1h3v3H1zM5 1h3v3H5zM9 1h3v3H9zM1 5h3v3H1zM5 5h3v3H5zM9 5h3v3H9zM1 9h3v3H1zM5 9h3v3H5zM9 9h3v3H9zM13 10h5l-2.5 3z" /></g>),
  listOpts: mk(14, 14, <g><rect x="1" y="1.5" width="12" height="11" /><path d="M3 4.5h1M5 4.5h6M3 7h1M5 7h6M3 9.5h1M5 9.5h6" /></g>),
  folder: mk(16, 14, <path d="M1 3h5l1 1.5h8V13H1z" fill="#bcbcbc" stroke="#ddd" />),
  folderFill: mk(14, 12, <g><path d="M1 2h4l1 1.5h7V11H1z" fill="#aaa" stroke="#ccc" /><path d="M1 5h12" stroke="#eee" /></g>),
  listView: mk(14, 12, <path d="M1 1h12M1 4h12M1 7h12M1 10h12" stroke="#ddd" strokeWidth="1.6" />),
  gridView: mk(14, 12, <g fill="#ccc" stroke="none"><path d="M0 0h4v3H0zM5 0h4v3H5zM10 0h4v3h-4zM0 4.5h4v3H0zM5 4.5h4v3H5zM10 4.5h4v3h-4zM0 9h4v3H0zM5 9h4v3H5zM10 9h4v3h-4z" /></g>),
  unite: mk(14, 14, <g stroke="#bbb"><rect x="0.5" y="0.5" width="9" height="9" fill="#999" /><rect x="4.5" y="4.5" width="9" height="9" fill="#777" /></g>),
  minus: mk(14, 14, <g stroke="#bbb"><rect x="0.5" y="0.5" width="9" height="9" fill="#999" /><rect x="4.5" y="4.5" width="9" height="9" fill="#4a4a4a" stroke="#888" /></g>),
  intersect: mk(14, 14, <g stroke="#bbb"><rect x="0.5" y="0.5" width="9" height="9" /><rect x="4.5" y="4.5" width="9" height="9" /><rect x="5" y="5" width="4" height="4" fill="#999" stroke="none" /></g>),
  exclude: mk(14, 14, <g stroke="#bbb"><rect x="0.5" y="0.5" width="9" height="9" fill="#888" /><rect x="4.5" y="4.5" width="9" height="9" fill="#888" /><rect x="5" y="5" width="4" height="4" fill="#4a4a4a" stroke="none" /></g>),
  pf1: mk(15, 14, <g stroke="#bbb"><rect x="0.5" y="0.5" width="6" height="6" /><rect x="3.5" y="3.5" width="6" height="6" /><rect x="7.5" y="6.5" width="7" height="7" /></g>),
  pf2: mk(15, 14, <g fill="#aaa" stroke="#bbb"><path d="M1 1h6v3h3v4H1z" /><path d="M6 9h3V5h5v9H6z" fill="#888" /></g>),
  pf3: mk(15, 14, <g fill="#bbb" stroke="none"><rect x="0" y="0" width="10" height="9" /><path d="M11 5h4v9H5v-4h6z" fill="#999" /></g>),
  pf4: mk(15, 14, <g stroke="#666"><rect x="0.5" y="0.5" width="9" height="9" fill="#555" /><rect x="4.5" y="4.5" width="10" height="9" fill="#777" /><rect x="4" y="5" width="6" height="4" fill="#aaa" stroke="none" /></g>),
  pf5: mk(15, 14, <g stroke="#ccc"><rect x="0.5" y="0.5" width="8" height="8" /><rect x="3.5" y="3.5" width="4" height="4" /><rect x="6.5" y="5.5" width="8" height="8" /></g>),
  pf6: mk(15, 14, <g stroke="#bbb"><rect x="0.5" y="0.5" width="9" height="9" fill="#4f4f4f" stroke="#333" /><path d="M11 5.5h3.5v8h-8V10" stroke="#ccc" /></g>),
  dropThumb: mk(7, 4, <path d="M0 0h7L3.5 4z" fill="#ccc" stroke="none" />),
  knob: mk(10, 10, <path d="M1 9.5V4.5L5 .5l4 4v5z" fill="#5f5f5f" stroke="#2a2a2a" />),
  camera: mk(14, 12, <g fill="#777" stroke="none"><path d="M0 2h4l1-2h4l1 2h4v10H0z" /><circle cx="7" cy="7" r="2.5" fill="#444" /></g>),
  tr1: mk(16, 16, <g><circle cx="9" cy="8" r="6.5" fill="#777" stroke="#555" /><circle cx="5" cy="11" r="3" fill="#4a4a4a" stroke="#777" strokeDasharray="1 1" /></g>),
  tr3: mk(16, 14, <g stroke="#6e6e6e"><rect x="0.5" y="0.5" width="15" height="12" /><path d="M0 4.5h16M0 8.5h16M5.5 0v13M10.5 0v13" /></g>),
  tr4: mk(16, 13, <g><defs><linearGradient id="tr" x1="0" x2="1"><stop offset="0" stopColor="#333" /><stop offset="1" stopColor="#777" /></linearGradient></defs><rect x="0.5" y="0.5" width="15" height="12" fill="url(#tr)" stroke="#666" /></g>),
  tr5: mk(16, 13, <g><rect x="0.5" y="0.5" width="7" height="12" fill="#444" stroke="#777" /><rect x="8" y="0.5" width="7.5" height="12" fill="#888" stroke="#777" /></g>),
  tr6: mk(14, 14, <path d="M1 1h7l5 4v4a4 4 0 0 1-7 2L3 8H1z" stroke="#6a6a6a" />),
  burger: mk(12, 8, <path d="M0 .5h1M2 .5h10M0 3h1M2 3h10M0 5.5h1M2 5.5h10" stroke="#666" />),
  dimEye: mk(14, 10, <g><path d="M1 5q6-7 12 0-6 7-12 0z" fill="#666" stroke="#666" /><circle cx="7" cy="4.5" r="2" fill="#444" stroke="none" /></g>),
  updown: mk(7, 11, <path d="M1 4l2.5-3L6 4M1 7l2.5 3L6 7" stroke="#d0d0d0" />),
  charT: mk(20, 20, <g stroke="#b5b5b5" strokeWidth="1.5"><path d="M2 4h16M10 4v12M7 16h6" /></g>),
  charBox: mk(20, 20, <g stroke="#ccc"><rect x="3.5" y="3.5" width="13" height="13" /><rect x="1.5" y="1.5" width="3" height="3" fill="#aaa" /><rect x="15.5" y="1.5" width="3" height="3" fill="#aaa" /><rect x="1.5" y="15.5" width="3" height="3" fill="#aaa" /><rect x="15.5" y="15.5" width="3" height="3" fill="#aaa" /><path d="M7 7h6M10 7v6" /></g>),
  charMag: mk(18, 14, <g stroke="#333"><circle cx="7" cy="6" r="4.5" /><path d="M3.5 9.5L1 13" strokeWidth="1.5" /><path d="M13 9h4l-2 3z" fill="#333" stroke="none" /></g>),
  va: mk(20, 18, <g stroke="#c4c4c4" strokeWidth="1.2"><path d="M1 2l4 11 4-11M8 13l4-11 4 11M9.5 9h5M4 16h14" /></g>),
  cap1: mk(16, 14, <path d="M1 13V1h14M5 13V5h6" stroke="#777" strokeWidth="1.5" />),
  cap2: mk(16, 14, <path d="M1 13V1h14M5 13V5h10" stroke="#777" strokeWidth="1.5" />),
  angle: mk(14, 12, <path d="M1 11L10 1v10zM7 5q2 2 2 6" stroke="#6e6e6e" />),
  ratio: mk(16, 16, <g stroke="#777"><path d="M2 1v13M0 3l2-2 2 2M0 12l2 2 2-2" /><ellipse cx="10" cy="6" rx="5" ry="4" /><path d="M5 14h10" /></g>),
  gradSmall: mk(16, 14, <g fill="#6a6a6a" stroke="none"><rect x="3" y="0" width="10" height="6" /><rect x="3" y="8" width="10" height="6" /><path d="M14 1h2l-1 2zM0 11l2-2v3z" /></g>),
  trashGhost: mk(12, 14, <g stroke="#5e5e5e"><path d="M1 3h10M4 1h4M2 4v9h8V4M5 5v7M7 5v7" /></g>),
  a1: mk(14, 16, <g stroke="#c4c4c4"><path d="M.5 0v16" /><rect x="1.5" y="2.5" width="9" height="5" fill="#a5a5a5" /><rect x="1.5" y="9.5" width="12" height="5" /></g>),
  a2: mk(14, 16, <g stroke="#c4c4c4"><path d="M7 0v16" /><rect x="2.5" y="2.5" width="9" height="5" fill="#a5a5a5" /><rect x="1.5" y="9.5" width="11" height="5" fill="#4a4a4a" /></g>),
  a3: mk(14, 16, <g stroke="#c4c4c4"><path d="M13.5 0v16" /><rect x="3.5" y="2.5" width="9" height="5" fill="#a5a5a5" /><rect x="0.5" y="9.5" width="12" height="5" /></g>),
  a4: mk(14, 15, <g stroke="#c4c4c4"><path d="M0 .5h14" /><rect x="0.5" y="1.5" width="5" height="11" /><rect x="8" y="1.5" width="5" height="8" fill="#a5a5a5" /></g>),
  a5: mk(16, 14, <g stroke="#c4c4c4"><path d="M0 7h16" /><rect x="2.5" y="1.5" width="4" height="11" fill="#4a4a4a" /><rect x="9" y="3.5" width="5" height="7" fill="#a5a5a5" /></g>),
  a6: mk(14, 15, <g stroke="#c4c4c4"><path d="M0 14.5h14" /><rect x="0.5" y="2.5" width="5" height="11" /><rect x="8" y="5.5" width="5" height="8" fill="#a5a5a5" /></g>),
  d1: mk(16, 13, <g stroke="#c4c4c4"><path d="M0 .5h16M0 7.5h16" /><rect x="4.5" y="1.5" width="7" height="3" fill="#a5a5a5" /><rect x="3.5" y="9" width="9" height="3.5" /></g>),
  d2: mk(16, 13, <g stroke="#c4c4c4"><path d="M0 3h16M0 10h16" /><rect x="5" y="1" width="6" height="3.5" fill="#a5a5a5" /><rect x="3.5" y="8.5" width="9" height="3.5" fill="#4a4a4a" /></g>),
  d3: mk(16, 13, <g stroke="#c4c4c4"><path d="M0 5.5h16M0 12.5h16" /><rect x="5" y="1.5" width="6" height="3.5" fill="#a5a5a5" /><rect x="3.5" y="8" width="9" height="4" /></g>),
  d4: mk(13, 16, <g stroke="#c4c4c4"><path d="M.5 0v16M7.5 0v16" /><rect x="1.5" y="3.5" width="3.5" height="9" /><rect x="9" y="4.5" width="3.5" height="7" fill="#a5a5a5" /></g>),
  d5: mk(13, 16, <g stroke="#c4c4c4"><path d="M3 0v16M10 0v16" /><rect x="1" y="3.5" width="4" height="9" fill="#4a4a4a" /><rect x="8.5" y="4.5" width="3.5" height="7" fill="#a5a5a5" /></g>),
  d6: mk(13, 16, <g stroke="#c4c4c4"><path d="M5.5 0v16M12.5 0v16" /><rect x="1" y="4.5" width="3.5" height="7" fill="#a5a5a5" /><rect x="8" y="3.5" width="4" height="9" /></g>),
  s1: mk(15, 13, <g stroke="#c4c4c4"><path d="M0 5h4M0 8h4" /><rect x="6.5" y="1" width="6" height="3.5" fill="#a5a5a5" /><rect x="5.5" y="8" width="9" height="4.5" /></g>),
  s2: mk(13, 15, <g stroke="#c4c4c4"><path d="M5 0v4M8 0v4" /><rect x="0.5" y="5.5" width="4" height="9" /><rect x="8" y="6.5" width="4.5" height="6" fill="#a5a5a5" /></g>),
  alignTo: mk(24, 16, <g stroke="#999"><rect x="3.5" y="2.5" width="11" height="11" strokeDasharray="2 1" /><path d="M0 2.5h2M0 13.5h2M16 2.5h2M16 13.5h2M3.5 0v1M14.5 0v1M3.5 15v1M14.5 15v1M7 8h4M9 6v4" /><path d="M18 6h6l-3 3.5z" fill="#c4c4c4" stroke="none" /></g>),
  portrait: mk(16, 16, <g stroke="#bbb"><rect x="4.5" y="2.5" width="7" height="11" /><path d="M0 2.5h3M13 2.5h3M0 13.5h3M13 13.5h3M4.5 0v1.5M11.5 0v1.5M4.5 14.5v1.5M11.5 14.5v1.5" strokeDasharray="1 1" /></g>),
  land: mk(16, 14, <g stroke="#bbb"><rect x="2.5" y="3.5" width="11" height="7" /><path d="M0 3.5h2M14 3.5h2M0 10.5h2M14 10.5h2M2.5 0v2.5M13.5 0v2.5M2.5 11.5v2.5M13.5 11.5v2.5" strokeDasharray="1 1" /></g>),
  upBig: mk(12, 14, <path d="M6 0l6 7H8v7H4V7H0z" fill="#6b6b6b" stroke="none" />),
  downBig: mk(12, 14, <path d="M6 14l6-7H8V0H4v7H0z" fill="#c4c4c4" stroke="none" />),
  statusIcon: mk(14, 11, <g><path d="M1 2.5h6M1 2.5v8h9V7" stroke="#ccc" strokeWidth="1.3" /><path d="M4 8c0-3 2-4 5-4V1l5 4.5-5 4V7c-2 0-4 0-5 1z" fill="#ccc" stroke="none" /></g>),
  first: mk(7, 9, <g fill="#666" stroke="#666"><path d="M.5 0v9" /><path d="M7 0v9L2 4.5z" stroke="none" /></g>),
  last: mk(7, 9, <g fill="#ccc" stroke="#ccc"><path d="M6.5 0v9" /><path d="M0 0v9l5-4.5z" stroke="none" /></g>),
  resize: mk(10, 10, <g fill="#191919" stroke="none"><path d="M8 0h1v1H8zM6 2h1v1H6zM8 2h1v1H8zM4 4h1v1H4zM6 4h1v1H6zM8 4h1v1H8zM2 6h1v1H2zM4 6h1v1H4zM6 6h1v1H6zM8 6h1v1H8zM0 8h1v1H0zM2 8h1v1H2zM4 8h1v1H4zM6 8h1v1H6zM8 8h1v1H8z" /></g>),
};
type IconName = keyof typeof Ics;
const Ico = ({ n, s, c }: { n: IconName; s?: number; c?: string }) => {
  const C = Ics[n];
  return <C s={s} c={c} />;
};

/* ---------- data ---------- */
const toolGroups: [IconName, boolean, IconName, boolean, boolean?][][] = [
  [['select', false, 'direct', true, true], ['wand', false, 'lasso', false]],
  [['pen', true, 'curve', true], ['type', true, 'line', true], ['ellipse', true, 'brush', true], ['blob', true, 'eraser', true]],
  [['rotate', true, 'scale', true], ['warp', true, 'freeT', true], ['shape', true, 'persp', true]],
  [['mesh', false, 'grad', false], ['dropper', true, 'blend', false]],
  [['spray', true, 'chart', true]],
  [['artb', false, 'knife', true], ['hand', true, 'zoom', false]],
];
const menus = ['Dosya', 'Düzenle', 'Nesne', 'Yazım', 'Seç', 'Efekt', 'Görünüm', 'Pencere', 'Yardım'];
const R1 = ['#e30613', '#ffed00', '#009640', '#009fe3', '#312783', '#e6007e', '#be1622', '#e6332a', '#e94e1b', '#f39200', '#f9b233', '#fcea10', '#dedc00', '#95c11f', '#3aaa35', '#008d36'];
const R2 = ['#006633', '#2fac66', '#00a19a', '#36a9e1', '#1d71b8', '#2d2e83', '#29235c', '#662483', '#951b81', '#a2195b', '#d60b52', '#e71d73', '#cbbba0', '#a48a7b', '#7b6a58', '#634e42', '#ca9e67', '#b17f4a', '#936037', '#7d4e24'];
const R3 = ['#683c11', '#432918', 'linear-gradient(to right,#fff,#000)', 'linear-gradient(to right,#fff200,#f7931e,#e8112d)', 'linear-gradient(to right,#1d71b8,#a9d4f0 60%,#fff)', 'radial-gradient(circle,#fff 30%,#888 48%,#000 70%)', 'repeating-conic-gradient(#7cc142 0 25%,#fff 0 40%,#f6d13b 0 55%)', 'repeating-conic-gradient(#8a5a3c 0 25%,#e6d2bd 0 50%) 0 0/4px 4px'];
const R4 = ['#1d1d1b', '#3c3c3b', '#575756', '#706f6f', '#878787', '#9d9d9c', '#b2b2b2', '#c6c6c6', '#dadada', '#ededed', '#f6f6f6'];
const R5 = ['#e30613', '#ec6608', '#ffdd00', '#009640', '#27348b', '#7d2e8d'];

const PMenu = () => <TabMenu><Ico n="menu" /></TabMenu>;
const UD = () => <Ico n="updown" />;
const SelA = ({ dim, bg, w }: { dim?: boolean; bg?: string; w?: number }) => (
  <SelectArrow $bg={bg} $w={w}><Tri $s={4} $c={dim ? '#8a8a8a' : '#d4d4d4'} /></SelectArrow>
);

const layers: { name: string; eye: boolean; icon: IconName; arrow?: boolean; sel?: boolean }[] = [
  { name: 'katman 1', eye: true, icon: 'thC', sel: true },
  { name: '<Yol>', eye: true, icon: 'thL' },
  { name: '<Yol>', eye: false, icon: 'thL' },
  { name: '<Grup>', eye: true, icon: 'thR', arrow: true },
];

export default function App() {
  return (
    <Root>
      <Global />
      <MenuBar>
        <AiLogo>Ai</AiLogo>
        <MenuList>{menus.map(m => <span key={m}>{m}</span>)}</MenuList>
        <BarSep />
        <AppBadge $ml={16}>Br</AppBadge>
        <AppBadge $ml={20}>St</AppBadge>
        <MenuIconSlot $ml={23}><Ico n="arrange" /><Tri $s={3} $c="#ccc" /></MenuIconSlot>
        <MenuIconSlot $ml={17}><Ico n="rocket" /></MenuIconSlot>
        <BarSep $ml={927} />
        <WorkspaceName>Esasları</WorkspaceName>
        <MenuIconSlot $ml={2} $mt={13}><Tri $s={3} $c="#ccc" /></MenuIconSlot>
        <BarSep $ml={13} />
        <SearchBox><Ico n="search" /></SearchBox>
        <WindowButtons>
          <WinBtn $w={29}><Svg width="11" height="4" viewBox="0 0 11 4"><rect width="11" height="3" y="1" fill="#e0e0e0" stroke="none" /></Svg></WinBtn>
          <WinBtn $w={27}><Svg width="13" height="11" viewBox="0 0 13 11" $c="#e0e0e0" strokeWidth="1.5"><path d="M4 3V1h8v6H9M1 4h8v6H1z" /></Svg></WinBtn>
          <WinBtn $w={47}><Svg width="11" height="9" viewBox="0 0 11 9" $c="#e8e8e8" strokeWidth="2"><path d="M1 0l9 9M10 0L1 9" /></Svg></WinBtn>
        </WindowButtons>
      </MenuBar>

      <ControlBar>
        <DotsGrip />
        <NoSel>Seçim Yok</NoSel>
        <BarSep $ml={13} $h={26} />
        <FillChip $ml={7} />
        <Drop><Tri $s={3} /></Drop>
        <NoneChip $ml={8} />
        <Drop><Tri $s={3} /></Drop>
        <OrangeLabel $ml={13} $w={32}>Kontur:</OrangeLabel>
        <Stepper $ml={7}><Tri $dir="up" $s={3} /><Tri $s={3} /></Stepper>
        <Field $w={47} $bg="#a3a3a3" />
        <Drop $ml={0}><Tri $s={4} /></Drop>
        <Field $w={106} $ml={7} $bg="#727272"><SelectArrow $w={15}><Tri $s={3} $c="#555" /></SelectArrow></Field>
        <BrushBox><BrushDot />5 pt. Yuvarlak</BrushBox>
        <Drop><Tri $s={3} /></Drop>
        <OrangeLabel $ml={8} $w={35}>Opaklık:</OrangeLabel>
        <Field $w={51} $ml={8} $bg="#a9a9a9">100%</Field>
        <Drop $ml={0}><Tri $dir="right" $s={3} /></Drop>
        <PlainLabel $ml={7} $w={24}>Stil:</PlainLabel>
        <FillChip $ml={0} $w={19} $bg="#ececec" />
        <Drop $ml={0} $w={14}><Tri $s={3} /></Drop>
        <BarSep $ml={8} $h={26} />
        <Btn $w={77} $ml={6}>Belge Ayarları</Btn>
        <Btn $w={60} $ml={9}>Tercihler</Btn>
        <MenuIconSlot $ml={12} $mt={0}><Ico n="ctlIcon" /></MenuIconSlot>
        <MenuIconSlot $ml={7} $mt={0}><Tri $s={3} $c="#ddd" /></MenuIconSlot>
        <MenuIconSlot $ml={978} $mt={0}><Ico n="menu" /></MenuIconSlot>
      </ControlBar>

      <Workspace>
        <ToolColumn>
          <DockHead><Collapse /></DockHead>
          <ToolGrip><GripBars /></ToolGrip>
          {toolGroups.map((g, i) => (
            <ToolGroup key={i}>
              {g.map(([a, ac, b, bc, active]) => (
                <ToolRow key={a}>
                  <Tool $corner={ac}><Ico n={a} /></Tool>
                  <Tool $corner={bc} $active={active}><Ico n={b} /></Tool>
                </ToolRow>
              ))}
            </ToolGroup>
          ))}
          <ColorWell>
            <BigFill />
            <BigStroke><StrokeHole /></BigStroke>
            <SlashSvg width="35" height="35" viewBox="0 0 35 35">
              <path d="M0 35L35 0" stroke="#ef1c25" strokeWidth="2.5" />
            </SlashSvg>
            <SwapSlot><Ico n="swap" /></SwapSlot>
            <DefaultSlot><Ico n="defaults" /></DefaultSlot>
          </ColorWell>
          <ToolSegments $mt={6} $h={20}>
            <ToolSeg $on><MiniSw $bg="#1d1d1b" $dark /></ToolSeg>
            <ToolSeg><MiniSw $bg="linear-gradient(to right,#fff,#222)" /></ToolSeg>
            <ToolSeg><MiniSw $bg={NONE_BG} /></ToolSeg>
          </ToolSegments>
          <ToolSegments $mt={5} $h={17}>
            <ToolSeg $on><Ico n="colorMode" /></ToolSeg>
            <ToolSeg><Ico n="drawBehind" /></ToolSeg>
            <ToolSeg><Ico n="drawInside" /></ToolSeg>
          </ToolSegments>
          <ScreenSlot><Ico n="screen" /></ScreenSlot>
        </ToolColumn>

        <DocArea>
          <DocTabs>
            <DocTab>Igoo.ai @ %150 (RGB/GPU Önizleme)<DocClose><Ico n="close" /></DocClose></DocTab>
          </DocTabs>
          <CanvasRow>
            <Canvas>
              <Artboard $w={384} $mr={1} />
              <Artboard $w={761} $mr={-1}>
                <ArtSvg width="761" height="884" viewBox="479 140 761 884">
                  <path fill="#1d1d1b" d="M865 288A306 307 0 0 0 865 902V858A262 263 0 0 1 865 332Z" />
                  <path fill="#1d1d1b" d="M864.5 297A289 298 0 0 1 864.5 893V867A263 272 0 0 0 864.5 323Z" />
                </ArtSvg>
              </Artboard>
              <WideArtboard $w={100} />

              <PanelStack $x={1216} $y={121} $w={262}>
                <Panel $h={315}>
                  <TitleStrip $h={13}><Collapse /><Ico n="close" /></TitleStrip>
                  <TabStrip><PTabPlain $active $w={88}>Görüntü İzleme</PTabPlain></TabStrip>
                  <Body>
                    <TraceIcons>
                      <Ico n="tr1" /><Ico n="camera" /><Ico n="tr3" /><Ico n="tr4" /><Ico n="tr5" /><Ico n="tr6" />
                    </TraceIcons>
                    <FormRow $mt={9}><FormLabel $w={54}>Hazır Ayar:</FormLabel><Select $w={164}>[Varsayılan]<SelA dim /></Select><Spacer12><Ico n="burger" /></Spacer12></FormRow>
                    <FormRow $mt={10}><FormLabel $w={54}>Görünüm:</FormLabel><Select $w={164}>İzleme Sonucu<SelA dim /></Select><Spacer12><Ico n="dimEye" /></Spacer12></FormRow>
                    <FormRow $mt={8}><FormLabel $w={54}>Mod:</FormLabel><Select $w={164}>Siyah-Beyaz<SelA dim /></Select></FormRow>
                    <FormRow $mt={8}><FormLabel $w={54}>Palet:</FormLabel><Select $w={164}>Sınırlı<SelA dim /></Select></FormRow>
                    <FormRow $mt={8}>
                      <FormLabel $w={54}>Eşik:</FormLabel>
                      <SliderTrack><SliderKnob><Ico n="knob" /></SliderKnob></SliderTrack>
                      <Field $w={60} $ml={7} $bg="#7c7c7c">128</Field>
                    </FormRow>
                    <MiniLabels><span>Daralt</span><span>Genişlet</span></MiniLabels>
                    <AdvancedRow><Tri $dir="right" $s={4} $c="#bbb" /><span>Gelişmiş</span><AdvLine /></AdvancedRow>
                    <InfoArea>
                      <InfoDot>i</InfoDot>
                      <InfoGrid>
                        <span>Yollar:</span><span>0</span><span>Renkler: 0</span>
                        <span>Bağlantılar:</span><span>0</span><span />
                      </InfoGrid>
                    </InfoArea>
                    <FormRow $mt={5}>
                      <Check $ml={7} />
                      <DimText>Önizleme</DimText>
                      <Btn $w={60} $h={16} $ml={125} $dim>İzle</Btn>
                    </FormRow>
                  </Body>
                </Panel>
                <Panel $h={165}>
                  <TabStrip $h={15}>
                    <PTab $active $w={62}><UD />Karakter</PTab>
                    <PTabPlain $w={53}>Paragraf</PTabPlain>
                    <PTabPlain $w={65}>OpenType</PTabPlain>
                    <PMenu />
                  </TabStrip>
                  <CharBody>
                    <CharBox $h={23}><Ico n="charBox" /></CharBox>
                    <CharBox $h={19} $bg="#585858"><Ico n="charMag" /></CharBox>
                    <CharBox $h={20} $bg="#b4b4b4">Reg</CharBox>
                    <Ico n="charT" s={20} />
                    <Ico n="va" s={18} />
                  </CharBody>
                </Panel>
              </PanelStack>

              <PanelStack $x={1244} $y={453} $w={232} $z={2}>
                <Panel $h={95}>
                  <TitleStrip $h={13}><Collapse /></TitleStrip>
                  <TabStrip>
                    <PTab $active $w={45}><UD />Renk</PTab>
                    <PTabPlain $w={78}>Renk Kılavuzu</PTabPlain>
                    <PTabPlain $w={76}>Color Temaları</PTabPlain>
                    <PMenu />
                  </TabStrip>
                  <Body>
                    <ColorTop>
                      <MiniSw $bg={NONE_BG} />
                      <MiniSw $bg="#000" />
                      <MiniSw $bg="#fff" />
                      <HashLabel>#</HashLabel>
                      <Field $w={56} $bg="#a6a6a6" $ml={0}>1d1d1b</Field>
                    </ColorTop>
                    <Spectrum />
                  </Body>
                </Panel>
                <Panel $h={233}>
                  <TabStrip>
                    <PTabPlain $w={50}>Kontur</PTabPlain>
                    <PTab $active $w={59}><UD />Degrade</PTab>
                    <PMenu />
                  </TabStrip>
                  <Body>
                    <GradTop>
                      <GradLeft>
                        <GradPreview />
                        <GradArrow><Ico n="dropThumb" /></GradArrow>
                        <GradFill />
                        <GradStroke />
                        <GradSmall><Ico n="gradSmall" /></GradSmall>
                      </GradLeft>
                      <GradRight>
                        <FormRow $mt={0}><FormLabel $w={31} $c="#d6d6d6">Tür:</FormLabel><Select $w={140} $h={18} $bg="linear-gradient(#5e5e5e,#505050)" /></FormRow>
                        <FormRow $mt={8}>
                          <FormLabel $w={31} $c="#8c8c8c">Kontur:</FormLabel>
                          <CapGroup><CapBtn><Ico n="cap1" /></CapBtn><CapBtn><Ico n="cap2" /></CapBtn><CapBtn><Ico n="cap1" /></CapBtn></CapGroup>
                        </FormRow>
                        <FormRow $mt={7}><FormLabel $w={31}><AngleWrap><Ico n="angle" /></AngleWrap></FormLabel><Select $w={67} $h={18} $bg="#787878"><SelA bg="#6c6c6c" w={15} /></Select></FormRow>
                        <FormRow $mt={8}><FormLabel $w={31}><AngleWrap><Ico n="ratio" /></AngleWrap></FormLabel><Select $w={67} $h={19} $bg="#787878"><SelA bg="#6c6c6c" w={15} /></Select></FormRow>
                      </GradRight>
                    </GradTop>
                    <GradBarRow><GradBar /><Ico n="trashGhost" /></GradBarRow>
                    <FormRow $mt={27}><FormLabel $w={88}>Opaklık:</FormLabel><Select $w={66} $h={19} $bg="#787878"><SelA bg="#6c6c6c" w={15} /></Select></FormRow>
                    <FormRow $mt={7}><FormLabel $w={88}>Konum:</FormLabel><Select $w={66} $h={19} $bg="#787878"><SelA bg="#6c6c6c" w={15} /></Select></FormRow>
                  </Body>
                </Panel>
                <Panel $h={130}>
                  <TabStrip>
                    <PTab $active $w={69}><UD />Saydamlık</PTab>
                    <PMenu />
                  </TabStrip>
                  <Body>
                    <TransRow>
                      <Select $w={105} $h={18} $ml={0} $bg="linear-gradient(#5e5e5e,#505050)" $c="#dcdcdc">Normal<SelA /></Select>
                      <PlainLabel $ml={6} $w={41}>Opaklık:</PlainLabel>
                      <Field $w={51} $bg="#a9a9a9">100%</Field>
                      <Drop $ml={0} $h={18}><Tri $dir="right" $s={3} /></Drop>
                    </TransRow>
                    <TransRule />
                    <TransLower>
                      <MaskBox />
                      <MaskSide>
                        <Btn $w={80} $h={18} $dim>Maske Yap</Btn>
                        <CheckLine $mt={7}><Check /><DimText>Kes</DimText></CheckLine>
                        <CheckLine $mt={8}><Check /><DimText>Mske Ters Çvr</DimText></CheckLine>
                      </MaskSide>
                    </TransLower>
                    <BottomGrip $left={108}><GripBars /></BottomGrip>
                  </Body>
                </Panel>
              </PanelStack>

              <PanelStack $x={1467} $y={22} $w={317} $z={3}>
                <Panel $h={224}>
                  <TitleStrip><Collapse /><Ico n="close" /></TitleStrip>
                  <TabStrip><PTabPlain $active $w={63}>Katmanlar</PTabPlain><PMenu /></TabStrip>
                  <Body>
                    <ListBox $h={168}>
                      {layers.map((l, i) => (
                        <LayerRow key={i} $sel={l.sel}>
                          <EyeCell>{l.eye && <Ico n="eye" />}</EyeCell>
                          <LockCell />
                          <ColorBar />
                          <TreeCell $w={i === 0 ? 21 : 41} $pr={i === 0 ? 6 : 0}>
                            {i === 0 && <Tri $s={4} $c="#ddd" />}
                            {l.arrow && <Tri $dir="right" $s={4} $c="#ddd" $ml={16} />}
                          </TreeCell>
                          <Thumb><Ico n={l.icon} s={16} /></Thumb>
                          <LayerName $ml={5}>{l.name}</LayerName>
                          <TargetCell><Target /></TargetCell>
                          {l.sel && <CornerMark />}
                        </LayerRow>
                      ))}
                    </ListBox>
                    <PanelFooter>
                      1 Katman
                      <FooterIcons>
                        <Ico n="magnify" /><Ico n="subLayer" /><Ico n="makeClip" /><Ico n="newItem" /><Ico n="trashDim" />
                      </FooterIcons>
                      <Resize><Ico n="resize" /></Resize>
                    </PanelFooter>
                  </Body>
                </Panel>
                <Panel $h={172}>
                  <TabStrip><PTabPlain $active $w={86}>Renk Örnekleri</PTabPlain><PMenu /></TabStrip>
                  <Body>
                    <SwatchHead>
                      <MiniFill />
                      <MiniStroke />
                      <ViewToggle>
                        <ViewBtn $on><Ico n="listView" /></ViewBtn>
                        <ViewBtn><Ico n="gridView" /></ViewBtn>
                      </ViewToggle>
                    </SwatchHead>
                    <SwatchList>
                      <SwatchRows>
                        <SwatchLine>
                          <Swatch $bg={NONE_BG} />
                          <Swatch $bg="#fff"><Ico n="reg" s={13} /></Swatch>
                          <Swatch $bg="#fff" />
                          <FramedSwatch $bg="#1d1d1b" />
                          {R1.map(c => <Swatch key={c} $bg={c} />)}
                        </SwatchLine>
                        <SwatchLine>{R2.map(c => <Swatch key={c} $bg={c} />)}</SwatchLine>
                        <SwatchLine $mb={2}>{R3.map(c => <Swatch key={c} $bg={c} />)}</SwatchLine>
                        <SwatchLine $mb={2}>
                          <Swatch $bg="#5a5a5a"><Ico n="folderFill" s={12} /></Swatch>
                          {R4.map(c => <Swatch key={c} $bg={c} />)}
                        </SwatchLine>
                        <SwatchLine>
                          <Swatch $bg="#5a5a5a"><Ico n="folderFill" s={12} /></Swatch>
                          {R5.map(c => <Swatch key={c} $bg={c} />)}
                        </SwatchLine>
                      </SwatchRows>
                      <ListScroll><Tri $dir="up" $s={4} $c="#666" /><Tri $s={4} $c="#777" /></ListScroll>
                    </SwatchList>
                    <PanelFooter>
                      <FooterLeft><Ico n="libsMenu" /><Ico n="share" /><Ico n="cloud" /></FooterLeft>
                      <FooterIcons>
                        <Ico n="gridNew" /><Ico n="listOpts" /><Ico n="folder" /><Ico n="newItem" /><Ico n="trash" />
                      </FooterIcons>
                      <Resize><Ico n="resize" /></Resize>
                    </PanelFooter>
                  </Body>
                </Panel>
                <Panel $h={117}>
                  <TabStrip><PTabPlain $active $w={65}>Yol Bulucu</PTabPlain><PMenu /></TabStrip>
                  <Body>
                    <SectionLabel $mt={6}>Şekil Modları:</SectionLabel>
                    <IconLine $mt={6}>
                      <IconCell $w={37}><Ico n="unite" /></IconCell>
                      <IconCell $w={37}><Ico n="minus" /></IconCell>
                      <IconCell $w={37}><Ico n="intersect" /></IconCell>
                      <IconCell $w={37}><Ico n="exclude" /></IconCell>
                      <Btn $w={69} $h={17} $ml={7} $dim>Genişlet</Btn>
                    </IconLine>
                    <SectionLabel $mt={11}>Yol bulucular:</SectionLabel>
                    <IconLine $mt={8} $pl={3}>
                      {(['pf1', 'pf2', 'pf3', 'pf4', 'pf5', 'pf6'] as IconName[]).map(n => <IconCell key={n} $w={37}><Ico n={n} /></IconCell>)}
                    </IconLine>
                  </Body>
                </Panel>
                <Panel $h={178}>
                  <TabStrip><PTab $active $w={52}><UD />Hizala</PTab><PMenu /></TabStrip>
                  <Body>
                    <SectionLabel $mt={6}>Nesneleri Hizala:</SectionLabel>
                    <IconLine $mt={9}>
                      <IconCell><Ico n="a1" /></IconCell><IconCell><Ico n="a2" /></IconCell><IconCell $mr={14}><Ico n="a3" /></IconCell>
                      <IconCell><Ico n="a4" /></IconCell><IconCell><Ico n="a5" /></IconCell><IconCell><Ico n="a6" /></IconCell>
                    </IconLine>
                    <HRule $mt={8} $w={220} />
                    <SectionLabel $mt={6}>Nesneleri Dağıt:</SectionLabel>
                    <IconLine $mt={8}>
                      <IconCell><Ico n="d1" /></IconCell><IconCell><Ico n="d2" /></IconCell><IconCell $mr={14}><Ico n="d3" /></IconCell>
                      <IconCell><Ico n="d4" /></IconCell><IconCell><Ico n="d5" /></IconCell><IconCell><Ico n="d6" /></IconCell>
                    </IconLine>
                    <HRule $mt={11} $w={220} />
                    <SplitRow>
                      <SplitCol $w={152}>
                        <SectionLabel $mt={6}>Aralığı Dağıt:</SectionLabel>
                        <IconLine $mt={6}>
                          <IconCell $w={36}><Ico n="s1" /></IconCell>
                          <IconCell $w={26}><Ico n="s2" /></IconCell>
                          <Stepper $w={18} $h={18} $ml={6} $bg="#666"><Tri $dir="up" $s={3} $c="#8f8f8f" /><Tri $s={3} $c="#8f8f8f" /></Stepper>
                          <Field $w={57} $bg="#787878" $c="#3d3d3d">0 mm</Field>
                        </IconLine>
                      </SplitCol>
                      <VRule />
                      <SplitCol>
                        <SectionLabel $mt={7} $ml={0}>Buraya Hizala:</SectionLabel>
                        <IconLine $mt={7} $pl={6}><Ico n="alignTo" /></IconLine>
                      </SplitCol>
                    </SplitRow>
                  </Body>
                </Panel>
                <Panel $h={209}>
                  <TabStrip><PTabPlain $active $w={95}>Çalışma Yüzeyleri</PTabPlain><PMenu /></TabStrip>
                  <Body>
                    <ListBox $h={160}>
                      {['Çalışma Yüzeyi 1', 'Çalışma Yüzeyi 1 kopya', 'Çalışma Yüzeyi 1 kopya 2'].map((t, i) => (
                        <ArtRow key={t} $sel={i === 0}>
                          <ArtNum>{i + 1}</ArtNum>
                          <ArtName>{t}</ArtName>
                          <ArtIcon><Ico n={i === 0 ? 'portrait' : 'land'} /></ArtIcon>
                        </ArtRow>
                      ))}
                    </ListBox>
                    <PanelFooter $h={18}>
                      3 Çalışma Yüzeyi
                      <FooterIcons $gap={14}>
                        <Ico n="upBig" /><Ico n="downBig" /><Ico n="newItem" /><Ico n="trash" />
                      </FooterIcons>
                      <Resize><Ico n="resize" /></Resize>
                    </PanelFooter>
                    <BottomGrip><GripBars /></BottomGrip>
                  </Body>
                </Panel>
              </PanelStack>
            </Canvas>
            <VScroll>
              <Tri $dir="up" $s={5} $c="#e8e8e8" />
              <VTrack />
              <VThumb />
              <Tri $s={5} $c="#e8e8e8" />
            </VScroll>
          </CanvasRow>
          <StatusRow>
            <StatusInfo>
              <MenuIconSlot $ml={10} $mt={0}><Ico n="statusIcon" /></MenuIconSlot>
              <Field $w={52} $h={15} $ml={11} $bg="#a4a4a4">150%</Field>
              <Drop $h={15} $w={14} $ml={0}><Tri $s={3} /></Drop>
              <MenuIconSlot $ml={10} $mt={0}><Ico n="first" /></MenuIconSlot>
              <MenuIconSlot $ml={10} $mt={0}><Tri $dir="left" $s={4} $c="#666" /></MenuIconSlot>
              <Field $w={42} $h={15} $ml={10} $bg="#a4a4a4">1</Field>
              <Drop $h={15} $w={14} $ml={0}><Tri $s={3} /></Drop>
              <MenuIconSlot $ml={11} $mt={0}><Tri $dir="right" $s={4} $c="#ccc" /></MenuIconSlot>
              <MenuIconSlot $ml={9} $mt={0}><Ico n="last" /></MenuIconSlot>
              <MenuIconSlot $ml={9} $mt={0}><StatusSep /></MenuIconSlot>
              <StatusText>Doğrudan Seçim</StatusText>
              <StatusSep />
              <MenuIconSlot $ml={6} $mt={0}><Tri $dir="right" $s={4} $c="#ddd" /></MenuIconSlot>
            </StatusInfo>
            <HScroll>
              <Tri $dir="left" $s={5} $c="#e8e8e8" />
              <HThumb />
              <Tri $dir="right" $s={5} $c="#e8e8e8" />
            </HScroll>
            <Corner />
          </StatusRow>
        </DocArea>

        <RightDock>
          <RightHead><Collapse /></RightHead>
          <RightTools>
            <RightGrip />
            <Ico n="cc" />
            <Ico n="libs" />
            <Ico n="assets" />
          </RightTools>
        </RightDock>
      </Workspace>
    </Root>
  );
}
